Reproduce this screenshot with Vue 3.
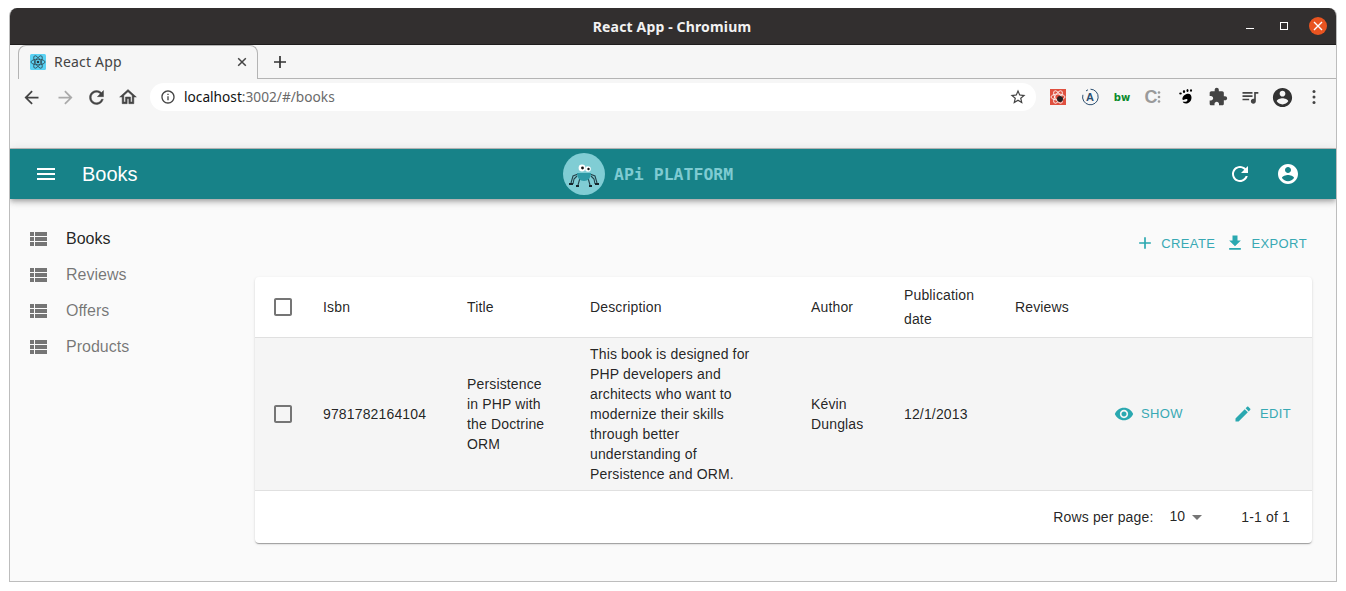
<script setup>
import { ref } from "vue";

const extensionGap = 32;

const resources = ref([
  { name: "Books", active: true },
  { name: "Reviews", active: false },
  { name: "Offers", active: false },
  { name: "Products", active: false },
]);

const columns = [
  { label: "Isbn", width: 144 },
  { label: "Title", width: 123 },
  { label: "Description", width: 221 },
  { label: "Author", width: 93 },
  { label: "Publication date", width: 111 },
  { label: "Reviews", width: 100 },
];

const book = {
  isbn: "9781782164104",
  title: "Persistence in PHP with the Doctrine ORM",
  description:
    "This book is designed for PHP developers and architects who want to modernize their skills through better understanding of Persistence and ORM.",
  author: "Kévin Dunglas",
  date: "12/1/2013",
};

const icons = {
  list: "M4 14h4v-4H4v4zm0 5h4v-4H4v4zM4 9h4V5H4v4zm5 5h12v-4H9v4zm0 5h12v-4H9v4zM9 5v4h12V5H9z",
  menu: "M3 18h18v-2H3v2zm0-5h18v-2H3v2zm0-7v2h18V6H3z",
  refresh: "M17.65 6.35C16.2 4.9 14.21 4 12 4c-4.42 0-7.99 3.58-7.99 8s3.57 8 7.99 8c3.73 0 6.84-2.55 7.73-6h-2.08c-.82 2.33-3.04 4-5.65 4-3.31 0-6-2.69-6-6s2.69-6 6-6c1.66 0 3.14.69 4.22 1.78L13 11h7V4l-2.35 2.35z",
  account: "M12 2C6.48 2 2 6.48 2 12s4.48 10 10 10 10-4.48 10-10S17.52 2 12 2zm0 3c1.66 0 3 1.34 3 3s-1.34 3-3 3-3-1.34-3-3 1.34-3 3-3zm0 14.2c-2.5 0-4.71-1.28-6-3.22.03-1.99 4-3.08 6-3.08 1.99 0 5.97 1.09 6 3.08-1.29 1.94-3.5 3.22-6 3.22z",
  add: "M19 13h-6v6h-2v-6H5v-2h6V5h2v6h6v2z",
  download: "M19 9h-4V3H9v6H5l7 7 7-7zM5 18v2h14v-2H5z",
  eye: "M12 4.5C7 4.5 2.73 7.61 1 12c1.73 4.39 6 7.5 11 7.5s9.27-3.11 11-7.5c-1.73-4.39-6-7.5-11-7.5zM12 17c-2.76 0-5-2.24-5-5s2.24-5 5-5 5 2.24 5 5-2.24 5-5 5zm0-8c-1.66 0-3 1.34-3 3s1.34 3 3 3 3-1.34 3-3-1.34-3-3-3z",
  edit: "M3 17.25V21h3.75L17.81 9.94l-3.75-3.75L3 17.25zM20.71 7.04c.39-.39.39-1.02 0-1.41l-2.34-2.34c-.39-.39-1.02-.39-1.41 0l-1.83 1.83 3.75 3.75 1.83-1.83z",
  checkbox: "M19 5v14H5V5h14m0-2H5c-1.1 0-2 .9-2 2v14c0 1.1.9 2 2 2h14c1.1 0 2-.9 2-2V5c0-1.1-.9-2-2-2z",
  back: "M20 11H7.83l5.59-5.59L12 4l-8 8 8 8 1.41-1.41L7.83 13H20v-2z",
  forward: "M12 4l-1.41 1.41L16.17 11H4v2h12.17l-5.58 5.59L12 20l8-8z",
  home: "M12 5.69l5 4.5V18h-2v-6H9v6H7v-7.81l5-4.5M12 3L2 12h3v8h6v-6h2v6h6v-8h3L12 3z",
  info: "M11 7h2v2h-2zm0 4h2v6h-2zm1-9C6.48 2 2 6.48 2 12s4.48 10 10 10 10-4.48 10-10S17.52 2 12 2zm0 18c-4.41 0-8-3.59-8-8s3.59-8 8-8 8 3.59 8 8-3.59 8-8 8z",
  star: "M22 9.24l-7.19-.62L12 2 9.19 8.63 2 9.24l5.46 4.73L5.82 21 12 17.27 18.18 21l-1.63-7.03L22 9.24zM12 15.4l-3.76 2.27 1-4.28-3.32-2.88 4.38-.38L12 6.1l1.71 4.04 4.38.38-3.32 2.88 1 4.28L12 15.4z",
  puzzle: "M20.5 11H19V7c0-1.1-.9-2-2-2h-4V3.5C13 2.12 11.88 1 10.5 1S8 2.12 8 3.5V5H4c-1.1 0-1.99.9-1.99 2v3.8H3.5c1.49 0 2.7 1.21 2.7 2.7s-1.21 2.7-2.7 2.7H2V20c0 1.1.9 2 2 2h3.8v-1.5c0-1.49 1.21-2.7 2.7-2.7 1.49 0 2.7 1.21 2.7 2.7V22H17c1.1 0 2-.9 2-2v-4h1.5c1.38 0 2.5-1.12 2.5-2.5S21.88 11 20.5 11z",
  queue: "M15 6H3v2h12V6zm0 4H3v2h12v-2zM3 16h8v-2H3v2zM17 6v8.18c-.31-.11-.65-.18-1-.18-1.66 0-3 1.34-3 3s1.34 3 3 3 3-1.34 3-3V8h3V6h-5z",
};
</script>

<template>
  <div class="window">
    <header class="titlebar">
      <div class="title">React App - Chromium</div>
      <div class="win-controls">
        <span class="win-min"></span>
        <span class="win-max"></span>
        <span class="win-close">
          <svg viewBox="0 0 18 18" width="18" height="18"><path d="M5 5l8 8M13 5l-8 8" stroke="#fff" stroke-width="1.4" /></svg>
        </span>
      </div>
    </header>

    <div class="tabstrip">
      <div class="tab">
        <svg class="favicon" viewBox="0 0 16 16" width="16" height="16">
          <rect width="16" height="16" rx="1.5" fill="#5ad2f4" />
          <g fill="none" stroke="#2a3a40" stroke-width=".7">
            <ellipse cx="8" cy="8" rx="7" ry="2.8" />
            <ellipse cx="8" cy="8" rx="7" ry="2.8" transform="rotate(60 8 8)" />
            <ellipse cx="8" cy="8" rx="7" ry="2.8" transform="rotate(120 8 8)" />
          </g>
          <circle cx="8" cy="8" r="1.3" fill="#2a3a40" />
        </svg>
        <span class="tab-title">React App</span>
        <svg class="tab-close" viewBox="0 0 10 10" width="10" height="10"><path d="M1.2 1.2l7.6 7.6M8.8 1.2l-7.6 7.6" stroke="#444" stroke-width="1.5" /></svg>
      </div>
      <svg class="new-tab" viewBox="0 0 14 14" width="14" height="14"><path d="M7 1v12M1 7h12" stroke="#333" stroke-width="1.7" /></svg>
      <div class="tabstrip-rest"></div>
    </div>

    <div class="browserbar">
      <div class="navrow">
        <div class="nav-buttons">
          <svg viewBox="0 0 24 24" width="21" height="21"><path :d="icons.back" fill="#444" /></svg>
          <svg viewBox="0 0 24 24" width="21" height="21"><path :d="icons.forward" fill="#aaa" /></svg>
          <svg viewBox="0 0 24 24" width="21" height="21"><path :d="icons.refresh" fill="#444" stroke="#444" stroke-width=".5" /></svg>
          <svg viewBox="0 0 24 24" width="20" height="20"><path :d="icons.home" fill="#444" stroke="#444" stroke-width=".6" /></svg>
        </div>
        <div class="omnibox">
          <svg viewBox="0 0 24 24" width="16" height="16"><path :d="icons.info" fill="#444" /></svg>
          <span class="url"><b>localhost</b>:3002/#/books</span>
          <svg class="star" viewBox="0 0 24 24" width="18" height="18"><path :d="icons.star" fill="#444" /></svg>
        </div>
        <div class="extensions" :style="{ gap: extensionGap - 20 + 'px' }">
          <svg viewBox="0 0 20 20" width="20" height="20">
            <rect x="2" y="2" width="16" height="16" fill="#e0503f" />
            <g fill="none" stroke="#fff" stroke-width=".8">
              <ellipse cx="10" cy="10" rx="7" ry="3" />
              <ellipse cx="10" cy="10" rx="7" ry="3" transform="rotate(60 10 10)" />
              <ellipse cx="10" cy="10" rx="7" ry="3" transform="rotate(120 10 10)" />
            </g>
            <circle cx="12" cy="12" r="3" fill="#222" />
          </svg>
          <svg viewBox="0 0 20 20" width="20" height="20">
            <path d="M10.5 2.2a7.8 7.8 0 1 1-7.6 5.6M6 4a7.8 7.8 0 0 1 2-1.2" fill="none" stroke="#2c4f70" stroke-width="1" />
            <text x="10" y="14.2" text-anchor="middle" class="ext-a">A</text>
          </svg>
          <svg viewBox="0 0 20 20" width="20" height="20">
            <text x="10" y="14" text-anchor="middle" class="ext-bw">bw</text>
          </svg>
          <svg viewBox="0 0 20 20" width="20" height="20">
            <text x="7" y="16" text-anchor="middle" class="ext-c">C</text>
            <circle cx="15" cy="5.500" r="1.300" fill="#9a9a9a" />
            <circle cx="15" cy="10" r="1.300" fill="#9a9a9a" />
            <circle cx="15" cy="14.500" r="1.300" fill="#9a9a9a" />
          </svg>
          <svg viewBox="0 0 20 20" width="20" height="20">
            <path d="M10.500 7c3-1 5 .5 5 3.500 0 3.500-2.500 6-5.500 6-2 0-3-1-3.200-2 1.500.5 3 .5 4-.2 1-.8 1-2-.2-2.200-1.500-.2-2.200 1-3.300 1-1 0-1.300-1.800-.3-3.300 1-1.500 2.200-2.300 3.500-2.800z" fill="#000" />
            <ellipse cx="4.500" cy="6.500" rx="1.300" ry="1" fill="#000" />
            <ellipse cx="8" cy="4.500" rx="1.100" ry="1.500" fill="#000" />
            <ellipse cx="11.500" cy="3.500" rx="1" ry="1.500" fill="#000" />
            <ellipse cx="15" cy="3.500" rx="1" ry="1.300" fill="#000" />
          </svg>
          <svg viewBox="0 0 24 24" width="20" height="20"><path :d="icons.puzzle" fill="#444" /></svg>
          <svg viewBox="0 0 24 24" width="20" height="20"><path :d="icons.queue" fill="#444" /></svg>
          <svg viewBox="0 0 24 24" width="23" height="23" class="ext-account"><path :d="icons.account" fill="#333" /></svg>
          <svg viewBox="0 0 20 20" width="20" height="20">
            <circle cx="10" cy="4.500" r="1.500" fill="#444" />
            <circle cx="10" cy="10" r="1.500" fill="#444" />
            <circle cx="10" cy="15.500" r="1.500" fill="#444" />
          </svg>
        </div>
      </div>
    </div>

    <div class="appbar">
      <div class="appbar-left">
        <svg viewBox="0 0 24 24" width="24" height="24"><path :d="icons.menu" fill="#fff" /></svg>
        <span class="appbar-title">Books</span>
      </div>
      <div class="logo">
        <svg viewBox="0 0 42 42" width="42" height="42">
          <circle cx="21" cy="21" r="21" fill="#80cdd4" />
          <g fill="none" stroke="#24444c" stroke-width="1.100">
            <path d="M15 21l-5 2-2 7M14 23l-3 3-1 5M27 21l5 2 2 7M28 23l3 3 1 5M17 25l-2 7M25 25l2 7" />
          </g>
          <path d="M14 20h14c0 5-3 8-7 8s-7-3-7-8z" fill="#2f9aa6" />
          <path d="M6 31h4M32 31h4M13 33h3M26 33h3" stroke="#16252a" stroke-width="1.800" />
          <circle cx="19" cy="15" r="3.400" fill="#fff" />
          <circle cx="25" cy="16" r="2.800" fill="#fff" />
          <circle cx="19.500" cy="15" r="1.400" fill="#111" />
          <circle cx="25.500" cy="16" r="1.200" fill="#111" />
        </svg>
        <span class="logo-text">APi PLATFORM</span>
      </div>
      <div class="appbar-right">
        <svg viewBox="0 0 24 24" width="24" height="24"><path :d="icons.refresh" fill="#fff" /></svg>
        <svg viewBox="0 0 24 24" width="24" height="24"><path :d="icons.account" fill="#fff" /></svg>
      </div>
    </div>

    <div class="layout">
      <nav class="sidebar">
        <a v-for="r in resources" :key="r.name" class="menu-item" :class="{ active: r.active }">
          <svg viewBox="0 0 24 24" width="24" height="24"><path :d="icons.list" fill="#757575" /></svg>
          <span>{{ r.name }}</span>
        </a>
      </nav>

      <main class="content">
        <div class="actions">
          <a class="btn">
            <svg viewBox="0 0 24 24" width="20" height="20"><path :d="icons.add" /></svg>
            <span>Create</span>
          </a>
          <a class="btn">
            <svg viewBox="0 0 24 24" width="20" height="20"><path :d="icons.download" /></svg>
            <span>Export</span>
          </a>
        </div>

        <section class="card">
          <table class="grid">
            <colgroup>
              <col style="width: 52px" />
              <col v-for="c in columns" :key="c.label" :style="{ width: c.width + 'px' }" />
              <col style="width: 119px" />
              <col style="width: 94px" />
            </colgroup>
            <thead>
              <tr>
                <th class="check">
                  <svg viewBox="0 0 24 24" width="24" height="24"><path :d="icons.checkbox" fill="#757575" /></svg>
                </th>
                <th v-for="c in columns" :key="c.label">{{ c.label }}</th>
                <th></th>
                <th></th>
              </tr>
            </thead>
            <tbody>
              <tr>
                <td class="check">
                  <svg viewBox="0 0 24 24" width="24" height="24"><path :d="icons.checkbox" fill="#757575" /></svg>
                </td>
                <td>{{ book.isbn }}</td>
                <td>{{ book.title }}</td>
                <td>{{ book.description }}</td>
                <td>{{ book.author }}</td>
                <td>{{ book.date }}</td>
                <td></td>
                <td>
                  <a class="btn row-btn">
                    <svg viewBox="0 0 24 24" width="20" height="20"><path :d="icons.eye" /></svg>
                    <span>Show</span>
                  </a>
                </td>
                <td>
                  <a class="btn row-btn">
                    <svg viewBox="0 0 24 24" width="20" height="20"><path :d="icons.edit" /></svg>
                    <span>Edit</span>
                  </a>
                </td>
              </tr>
            </tbody>
          </table>
          <footer class="pagination">
            <span>Rows per page:</span>
            <span class="per-page">
              <span class="per-value">10</span>
              <svg viewBox="0 0 24 24" width="24" height="24"><path d="M7 10l5 5 5-5z" fill="#757575" /></svg>
            </span>
            <span class="range">1-1 of 1</span>
          </footer>
        </section>
      </main>
    </div>
  </div>
</template>

<style scoped>
.window {
  margin: 8px 9px 0;
  height: 574px;
  box-sizing: border-box;
  border: 1px solid #bdbdbd;
  border-top: 0;
  border-radius: 8px 8px 0 0;
  display: flex;
  flex-direction: column;
  background: #fafafa;
  overflow: hidden;
  font-family: "Liberation Sans", Arial, sans-serif;
  color: rgba(0, 0, 0, 0.87);
}

.titlebar {
  height: 37px;
  flex: none;
  box-sizing: border-box;
  background: #322f2f;
  border-bottom: 1px solid #1e1c1c;
  display: flex;
  align-items: center;
  justify-content: flex-end;
  position: relative;
}

.title {
  position: absolute;
  left: 0;
  right: 2px;
  text-align: center;
  color: #f2f2f2;
  font: 700 14px "Noto Sans", sans-serif;
  letter-spacing: 0.15px;
}

.win-controls {
  display: flex;
  align-items: center;
  padding-right: 9px;
}

.win-min {
  width: 8px;
  height: 1px;
  background: #fff;
  margin-top: 4px;
  margin-right: 26px;
}

.win-max {
  width: 6px;
  height: 6px;
  border: 1px solid #fff;
  margin-right: 21px;
}

.win-close {
  width: 18px;
  height: 18px;
  border-radius: 50%;
  background: #e95420;
  display: flex;
}

.tabstrip {
  height: 34px;
  flex: none;
  background: #f6f6f6;
  display: flex;
  align-items: stretch;
}

.tab {
  margin-left: 8px;
  width: 240px;
  box-sizing: border-box;
  border: 1px solid #b4b4b4;
  border-bottom: 0;
  border-radius: 8px 8px 0 0;
  display: flex;
  align-items: center;
  padding: 0 10px 2px 11px;
  position: relative;
}

.favicon {
  flex: none;
}

.tab-title {
  margin-left: 8px;
  flex: 1;
  font: 14px "Noto Sans", sans-serif;
  letter-spacing: 0.2px;
  color: #444;
}

.tab-close {
  flex: none;
}

.new-tab {
  flex: none;
  align-self: center;
  margin-left: 15px;
  margin-right: -29px;
  position: relative;
}

.tabstrip-rest {
  flex: 1;
  border-bottom: 1px solid #b4b4b4;
  margin-left: 0;
}

.browserbar {
  height: 70px;
  flex: none;
  box-sizing: border-box;
  background: #f6f6f6;
  border-bottom: 1px solid #bdbdbd;
}

.navrow {
  display: flex;
  align-items: center;
  height: 36px;
}

.nav-buttons {
  width: 140px;
  padding-left: 11px;
  box-sizing: border-box;
  display: flex;
  align-items: center;
  flex: none;
}

.nav-buttons svg:nth-child(1) {
  margin-right: 13px;
}

.nav-buttons svg:nth-child(2) {
  margin-right: 10px;
}

.nav-buttons svg:nth-child(3) {
  margin-right: 11px;
}

.omnibox {
  margin-top: 0;
  width: 886px;
  height: 28px;
  box-sizing: border-box;
  border-radius: 14px;
  background: #fff;
  display: flex;
  align-items: center;
  padding: 0 9px 0 10px;
  flex: none;
}

.url {
  margin-left: 8px;
  flex: 1;
  font: 13.7px "Noto Sans", sans-serif;
  color: #6a6a6a;
  padding-bottom: 1px;
}

.url b {
  font-weight: 400;
  color: #111;
}

.extensions {
  margin-left: 12px;
  display: flex;
  align-items: center;
}

.ext-account {
  margin: 0 -1.5px;
}

.ext-a {
  font: 700 11px "Liberation Sans", sans-serif;
  fill: #2c4f70;
}

.ext-bw {
  font: 700 10px "DejaVu Sans", sans-serif;
  fill: #0b8a2d;
}

.ext-c {
  font: 700 18px "Liberation Sans Narrow", "Liberation Sans", sans-serif;
  fill: #9a9a9a;
}

.appbar {
  height: 50px;
  flex: none;
  background: #178288;
  color: #fff;
  display: flex;
  align-items: center;
  box-shadow: 0 2px 4px -1px rgba(0, 0, 0, 0.2), 0 4px 5px 0 rgba(0, 0, 0, 0.14), 0 1px 10px 0 rgba(0, 0, 0, 0.12);
  position: relative;
}

.appbar-left {
  width: 553px;
  flex: none;
  box-sizing: border-box;
  padding-left: 24px;
  display: flex;
  align-items: center;
  gap: 24px;
}

.appbar-title {
  font-size: 20px;
}

.logo {
  display: flex;
  align-items: center;
  gap: 9px;
}

.logo-text {
  font: 700 16.5px "DejaVu Sans Mono", monospace;
  color: #7fcbd2;
}

.appbar-right {
  margin-left: auto;
  padding-right: 36px;
  display: flex;
  align-items: center;
  gap: 24px;
}

.layout {
  flex: 1;
  display: flex;
  min-height: 0;
}

.sidebar {
  width: 245px;
  flex: none;
  padding-top: 22px;
  box-sizing: border-box;
}

.menu-item {
  height: 36px;
  display: flex;
  align-items: center;
  padding-left: 16px;
  gap: 16px;
  font-size: 16px;
  color: rgba(0, 0, 0, 0.54);
}

.menu-item.active {
  color: rgba(0, 0, 0, 0.87);
}

.content {
  flex: 1;
  min-width: 0;
  padding-right: 24px;
}

.actions {
  height: 78px;
  box-sizing: border-box;
  padding: 32px 5px 0 0;
  display: flex;
  justify-content: flex-end;
  align-items: flex-start;
  gap: 10px;
}

.btn {
  display: inline-flex;
  align-items: center;
  gap: 6px;
  height: 24px;
  font-size: 13px;
  letter-spacing: 0.4px;
  text-transform: uppercase;
  color: #38a9b4;
}

.btn svg {
  fill: #2aa8b0;
  flex: none;
}

.card {
  background: #fff;
  border-radius: 4px;
  box-shadow: 0 2px 1px -1px rgba(0, 0, 0, 0.2), 0 1px 1px 0 rgba(0, 0, 0, 0.14), 0 1px 3px 0 rgba(0, 0, 0, 0.12);
}

.grid {
  width: 100%;
  table-layout: fixed;
  border-collapse: collapse;
  font-size: 14px;
  letter-spacing: 0.15px;
}

.grid th {
  height: 60px;
  padding: 6px 24px 6px 16px;
  box-sizing: border-box;
  text-align: left;
  font-weight: 400;
  line-height: 24px;
  border-bottom: 1px solid #e0e0e0;
}

.grid td {
  padding: 6px 24px 6px 16px;
  line-height: 20px;
  background: #f5f5f5;
  border-bottom: 1px solid #e0e0e0;
}

.grid .check {
  padding: 0 0 0 16px;
}

.grid .check svg {
  display: block;
}

.row-btn {
  white-space: nowrap;
  gap: 7px;
  margin: 2px 0 0 -1px;
  letter-spacing: 0.4px;
}

.pagination {
  height: 52px;
  display: flex;
  align-items: center;
  justify-content: flex-end;
  padding-right: 22px;
  font-size: 14px;
  letter-spacing: 0.15px;
}

.per-page {
  margin-left: 16px;
  display: flex;
  align-items: center;
  margin-right: 32px;
}

.per-value {
  margin-top: -2px;
}

.range {
  white-space: nowrap;
}
</style>

<style>
html,
body {
  margin: 0;
  background: #fff;
  overflow: hidden;
}
</style>
